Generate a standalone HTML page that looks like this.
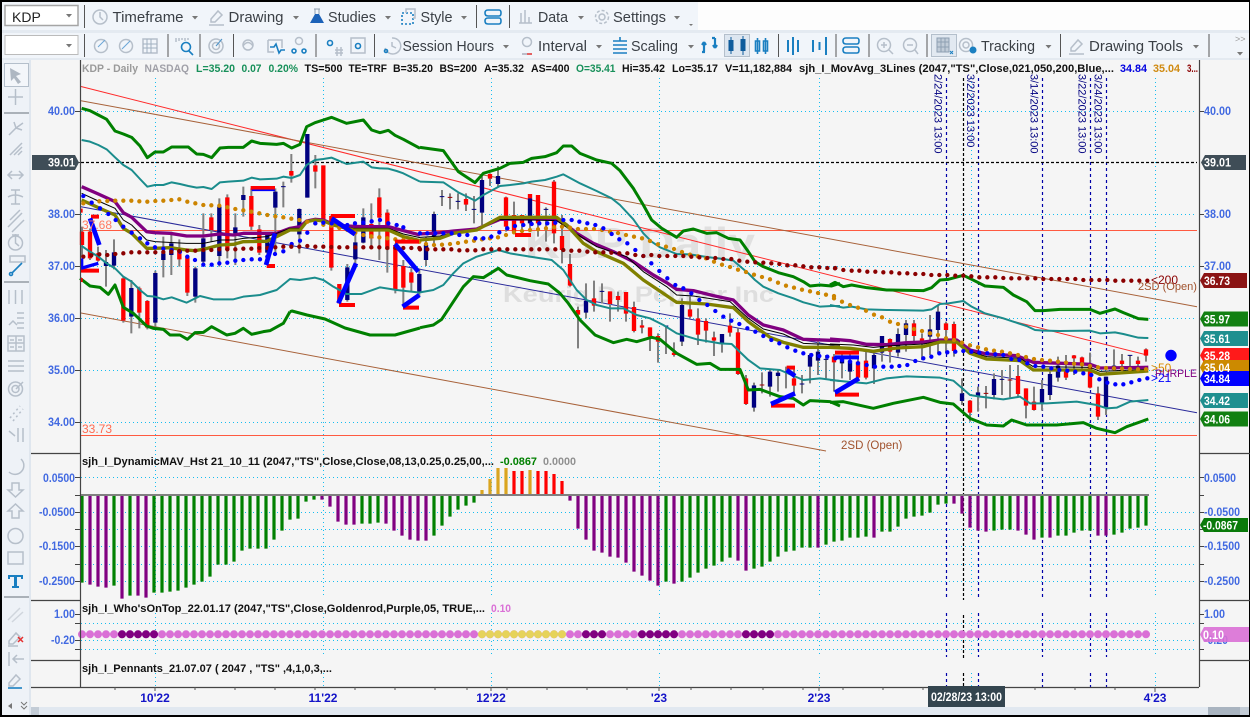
<!DOCTYPE html>
<html><head><meta charset="utf-8"><title>KDP Daily</title>
<style>
html,body{margin:0;padding:0;background:#000;width:1250px;height:717px;overflow:hidden}
svg{display:block;font-family:"Liberation Sans",sans-serif}
.tb{font-size:15px;fill:#3a3f45}
.inf{font-size:11px;font-weight:bold}
.ax{font-size:12px;font-weight:bold;fill:#4169e1}
.tg{font-size:12px;font-weight:bold;fill:#fff}
.tm{font-size:12px;font-weight:bold;fill:#1414c8}
.dv{stroke:#555;stroke-width:1}
.ic{fill:none;stroke:#b6bfca;stroke-width:1.5}
.ib{fill:none;stroke:#1a7fc1;stroke-width:1.6}
.ar{fill:#777}
.n{fill:none}
</style></head><body>
<svg width="1250" height="717" viewBox="0 0 1250 717" xmlns="http://www.w3.org/2000/svg">
<rect x="2" y="2" width="1247" height="713" fill="#f5f5f5"/>
<!-- toolbars -->
<rect x="2" y="2" width="1247" height="31" fill="#fdfdfd"/>
<rect x="2" y="2" width="696" height="28" fill="#f1f5fa"/>
<rect x="2" y="30" width="1247" height="3" fill="#e4eaf1"/>
<rect x="2" y="33" width="1247" height="26" fill="#f1f5fa"/>
<rect x="2" y="58" width="1247" height="2" fill="#e4eaf1"/>
<rect x="5" y="5.5" width="73" height="20" fill="#fff" stroke="#a5a5a5" stroke-width="1.5"/>
<text x="12" y="22" font-size="14" fill="#222">KDP</text>
<path class="ar" d="M66 14h6l-3 3.5z"/>
<rect x="5" y="35.5" width="73" height="19" fill="#fff" stroke="#bbb"/>
<path class="ar" d="M66 44h6l-3 3.5z"/>
<path class="dv" d="M84.5 5V28M476.5 5V28M509.5 5V28M84.5 34V57M168 34V57M200 34V57M233.500 34V57M316 34V57M374.500 34V57M778.500 34V57M836 34V57M869 34V57M927 34V57M1060.500 34V57M1209 34V57"/>
<text class="tb" x="112.500" y="22" textLength="71" lengthAdjust="spacingAndGlyphs">Timeframe</text>
<text class="tb" x="228.500" y="22" textLength="55" lengthAdjust="spacingAndGlyphs">Drawing</text>
<text class="tb" x="328" y="22" textLength="48" lengthAdjust="spacingAndGlyphs">Studies</text>
<text class="tb" x="420.500" y="22" textLength="32" lengthAdjust="spacingAndGlyphs">Style</text>
<text class="tb" x="538" y="22" textLength="30" lengthAdjust="spacingAndGlyphs">Data</text>
<text class="tb" x="613" y="22" textLength="53" lengthAdjust="spacingAndGlyphs">Settings</text>
<text class="tb" x="402.500" y="51" textLength="91.500" lengthAdjust="spacingAndGlyphs">Session Hours</text>
<text class="tb" x="538" y="51" textLength="49" lengthAdjust="spacingAndGlyphs">Interval</text>
<text class="tb" x="631" y="51" textLength="47" lengthAdjust="spacingAndGlyphs">Scaling</text>
<text class="tb" x="981" y="51" textLength="54" lengthAdjust="spacingAndGlyphs">Tracking</text>
<text class="tb" x="1089" y="51" textLength="94" lengthAdjust="spacingAndGlyphs">Drawing Tools</text>
<path class="ar" d="M192 16h6l-3 3.500zM293 16h6l-3 3.500zM385 16h6l-3 3.500zM461 16h6l-3 3.500zM578 16h6l-3 3.500zM674 16h6l-3 3.500zM689 24h4l-2 2zM503 45h6l-3 3.500zM596 45h6l-3 3.500zM688 45h6l-3 3.500zM1045.500 45h6l-3 3.500zM1193 45h6l-3 3.500zM1237 52h6l-3 3.500z"/>
<text x="1235" y="42" font-size="9" fill="#999">&gt;&gt;</text>
<!-- row 1 icons -->
<circle class="ic" cx="100" cy="17" r="7"/><path class="ic" d="M100 12V17L103 20"/>
<path class="ic" d="M211 19L218 11L222 15L215 22H211ZM209 25H224"/>
<path d="M314 9h6M315 9V14M319 9V14" stroke="#8fa0b0" fill="none"/><path d="M315 14h4l5 9h-14z" fill="#1c62b8"/>
<path class="ib" stroke-dasharray="2 2" d="M402 13H413V24H402Z"/><path class="ic" d="M406 13V9H415V18H413"/>
<path class="ib" stroke-width="2" d="M488 10H499Q501 10 501 13T499 16H488Q485 16 485 13T488 10ZM488 18H499Q501 18 501 21T499 24H488Q485 24 485 21T488 18Z"/>
<path class="ic" d="M519 23H532M521 23V13M525 23V10M529 23V17"/>
<circle class="ic" cx="602" cy="17" r="3"/><circle class="ic" cx="602" cy="17" r="6.500" stroke-dasharray="3 2"/>
<!-- row 2 icons -->
<circle class="ic" cx="101" cy="46" r="6.500"/><path d="M98 47L105 40" stroke="#6ba6d6" fill="none"/>
<circle class="ic" cx="126" cy="46" r="6.500"/><path d="M122 49L130 41" stroke="#6ba6d6" fill="none"/>
<rect class="ic" x="143" y="39" width="14" height="14" fill="#c5ced8"/><path d="M147 39V53M151 39V53M143 44H157M143 48H157" stroke="#9fb0c0" fill="none"/>
<circle class="ib" cx="186" cy="47" r="4.500"/><path class="ib" d="M189 51L193 55"/><path class="ic" d="M176 38V42M179 38V41M182 38V40M185 38V41M188 38V40"/>
<circle class="ic" cx="216" cy="46" r="7"/><circle class="ic" cx="216" cy="46" r="3.500"/><path d="M216 46L222 39" stroke="#4a92c8" fill="none"/>
<path class="ic" d="M243 46Q248 39 253 46"/><circle class="ic" cx="248" cy="45" r="5"/>
<path class="ic" d="M268 40H282V48M268 40V52H274"/><path class="ib" stroke-width="1" d="M270 47L274 47L276 44L279 53L281 50H285"/>
<circle class="ic" cx="299" cy="41" r="3.500"/><circle class="ib" stroke-width="1" cx="294" cy="51" r="2"/><circle class="ib" stroke-width="1" cx="304" cy="51" r="2"/>
<circle class="ib" stroke-width="3" cx="330" cy="43" r="2.500"/><path class="ic" d="M335 50H343M335 53H343M337 47V56M341 47V56" stroke-width="1"/>
<rect class="ic" x="351" y="38" width="14" height="15" fill="#d9e2ec"/><circle class="ib" stroke-width="3" cx="358" cy="46" r="2.500"/>
<path class="ic" d="M392 38A8 8 0 1 1 385 48M392 42V46L396 48"/><circle class="ib" cx="386" cy="51" r="1.500"/>
<circle class="ic" cx="527" cy="42" r="4.500"/><path d="M522 54H527" stroke="#aab" stroke-width="1.500"/><path d="M527 54H532" stroke="#e03030" stroke-width="1.500"/>
<path class="ib" d="M613 41H627M613 45H627M613 49H627M613 53H627M620 37V41"/>
<path d="M704 52V42M704 42L702 45M704 42L706 45M715 38V48M715 48L713 45M715 48L717 45M702 52h3M712 38h3" stroke="#1a7fc1" stroke-width="2.200" fill="none"/>
<rect x="724.500" y="34.500" width="25" height="22" fill="#dde6f0" stroke="#b4bfcb"/>
<path d="M731 37V54M743 36V55" stroke="#0f5c9c" fill="none"/><rect x="728.500" y="40" width="5" height="11" fill="#0f5c9c"/><rect x="740.500" y="39" width="5" height="12" fill="#0f5c9c"/>
<path class="ib" stroke-width="1" d="M755.500 41H759.500V51H755.500ZM763.500 41H767.500V51H763.500ZM757.500 38V54M765.500 38V54"/>
<path d="M788 40V52M793 37V55M798 40V52" stroke="#1a7fc1" stroke-width="2" fill="none"/>
<path d="M813 40V52M819.500 42V50M826 37V55" stroke="#1a7fc1" stroke-width="2" fill="none"/>
<path class="ib" stroke-width="2" d="M846 38H857Q859 38 859 41T857 44H846Q843 44 843 41T846 38ZM846 47H857Q859 47 859 50T857 53H846Q843 53 843 50T846 47Z"/>
<circle class="ic" cx="884" cy="45" r="6.500"/><path class="ic" d="M881 45H887M884 42V48M889 50L893 54"/>
<circle class="ic" cx="910" cy="45" r="6.500" stroke="#d0d6dd"/><path class="ic" d="M907 45H913M915 50L918 54" stroke="#d0d6dd"/>
<rect x="931.500" y="34.500" width="25" height="22" fill="#e2e9f1" stroke="#b4bfcb"/>
<rect x="937" y="38" width="12" height="14" fill="#c1ccd8" stroke="#8ea0b2"/><path d="M941 38V52M945 38V52M937 42H949M937 47H949" stroke="#8ea0b2" fill="none"/><path d="M950 51L953 54M953 51L950 54" stroke="#1a7fc1"/>
<circle class="ic" cx="966" cy="45" r="6.500"/><circle class="ic" cx="966" cy="45" r="3"/><circle cx="973" cy="50" r="3.500" fill="#1a7fc1"/>
<path class="ic" d="M1071 48L1078 40L1082 44L1075 51H1071ZM1069 54H1084"/>
<!-- info line -->
<text class="inf" fill="#9a9a9a" x="82" y="72" textLength="56" lengthAdjust="spacingAndGlyphs">KDP - Daily</text>
<text class="inf" fill="#a0a0a8" x="144.500" y="72" textLength="44.500" lengthAdjust="spacingAndGlyphs">NASDAQ</text>
<g fill="#18905a" class="inf"><text x="196" y="72" textLength="39" lengthAdjust="spacingAndGlyphs">L=35.20</text>
<text x="241.500" y="72" textLength="20" lengthAdjust="spacingAndGlyphs">0.07</text>
<text x="268.500" y="72" textLength="29.500" lengthAdjust="spacingAndGlyphs">0.20%</text>
<text x="576" y="72" textLength="39.500" lengthAdjust="spacingAndGlyphs">O=35.41</text></g>
<g fill="#111" class="inf"><text x="304.500" y="72" textLength="38" lengthAdjust="spacingAndGlyphs">TS=500</text>
<text x="348.500" y="72" textLength="38.500" lengthAdjust="spacingAndGlyphs">TE=TRF</text>
<text x="393" y="72" textLength="40" lengthAdjust="spacingAndGlyphs">B=35.20</text>
<text x="439.500" y="72" textLength="37.500" lengthAdjust="spacingAndGlyphs">BS=200</text>
<text x="484" y="72" textLength="40" lengthAdjust="spacingAndGlyphs">A=35.32</text>
<text x="531" y="72" textLength="38.500" lengthAdjust="spacingAndGlyphs">AS=400</text>
<text x="622" y="72" textLength="43" lengthAdjust="spacingAndGlyphs">Hi=35.42</text>
<text x="672" y="72" textLength="46" lengthAdjust="spacingAndGlyphs">Lo=35.17</text>
<text x="725" y="72" textLength="67" lengthAdjust="spacingAndGlyphs">V=11,182,884</text>
<text x="799" y="72" textLength="315" lengthAdjust="spacingAndGlyphs">sjh_I_MovAvg_3Lines (2047,"TS",Close,021,050,200,Blue,...</text></g>
<text class="inf" fill="#0000e0" x="1120" y="72" textLength="27" lengthAdjust="spacingAndGlyphs">34.84</text>
<text class="inf" fill="#d08a10" x="1153" y="72" textLength="27" lengthAdjust="spacingAndGlyphs">35.04</text>
<text class="inf" fill="#8b0000" x="1187" y="72" textLength="11" lengthAdjust="spacingAndGlyphs">3...</text>
<!-- watermark -->
<text x="525" y="258" font-size="44" font-weight="bold" fill="#e0e0e0" textLength="230" lengthAdjust="spacingAndGlyphs">KDP Daily</text>
<text x="503" y="302" font-size="22" font-weight="bold" fill="#dedede" textLength="271" lengthAdjust="spacingAndGlyphs">Keurig Dr Pepper Inc</text>
<!-- grids -->
<path stroke="#16bdf0" stroke-dasharray="1 3" fill="none" d="M81 111.500H1197M81 214.500H1197M81 266.500H1197M81 318.500H1197M81 370.500H1197M81 422.500H1197M81 477.500H1197M81 512.500H1197M81 529.500H1197M81 546.500H1197M81 564.500H1197M81 581.500H1197M81 623.500H1197M81 640.500H1197M81 649.500H1197"/>
<path stroke="#16bdf0" stroke-dasharray="1 3" fill="none" d="M155.500 78V597M155.500 613V657M155.500 673V687M323.500 78V597M323.500 613V657M323.500 673V687M491.500 78V597M491.500 613V657M491.500 673V687M659.500 78V597M659.500 613V657M659.500 673V687M819.500 78V597M819.500 613V657M819.500 673V687M971.500 78V597M971.500 613V657M971.500 673V687M1155.500 78V597M1155.500 613V657M1155.500 673V687"/>
<path stroke="#0000a8" stroke-width="1.200" stroke-dasharray="3 3" fill="none" d="M946.500 78V597M946.500 613V657M946.500 673V687M978.500 78V597M978.500 613V657M978.500 673V687M1042.500 78V597M1042.500 613V657M1042.500 673V687M1090.500 78V597M1090.500 613V657M1090.500 673V687M1106.500 78V597M1106.500 613V657M1106.500 673V687"/>
<path stroke="#000" stroke-width="1.200" stroke-dasharray="3 2" fill="none" d="M963.500 78V600M963.500 615V659M963.500 673V687M81 162.500H1197"/>
<!-- rotated dates -->
<g font-size="11" fill="#000080">
<text transform="translate(934.500,74) rotate(90)">2/24/2023 13:00</text>
<text transform="translate(967,74) rotate(90)">3/2/2023 13:00</text>
<text transform="translate(1030.500,74) rotate(90)">3/14/2023 13:00</text>
<text transform="translate(1078.500,74) rotate(90)">3/22/2023 13:00</text>
<text transform="translate(1094.500,74) rotate(90)">3/24/2023 13:00</text>
</g>
<!-- horizontal + diagonal -->
<path stroke="#ff5a40" fill="none" d="M81 230.500H1197M81 435.500H1197"/>
<path stroke="#ff2a2a" fill="none" d="M81 86.500L1147 355"/>
<path stroke="#a8623a" fill="none" d="M81 100.700L1197 306.700M81 313L826 451"/>
<path stroke="#2a2a9a" fill="none" d="M81 206.700L1197 412.700"/>
<!-- candles Z9 -->
<g transform="translate(80,200) scale(.33333)" fill="none">
<path stroke="#808080" stroke-width="6" d="M6 80V170M30 85V180M54 140V185M78 150V260M102 118V208M130 230V368M154 240V400M178 260V385M202 300V388M226 212V380M250 110V232M274 95V225M298 118V200M322 165V288M346 200V308M370 40V190M394 40V125M418 -5V200M442 -17V175M466 40V195M490 -40V50M514 -35V90M538 75V165M562 100V170M586 -35V165"/>
<path stroke="#ff0000" stroke-width="13" d="M6 95V135M30 95V175M54 160V182M130 235V362M178 265V338M202 303V383M298 150V178M322 168V278M394 52V90M442 -8V150M514 -12V80M538 88V158"/>
<path stroke="#000080" stroke-width="13" d="M78 186V198M102 157V197M154 264V350M226 219V368M250 160V180M274 130V165M346 205V290M370 115V185M418 20V168M466 82V100M490 -15V0M562 105V158M586 -25V23"/>
</g>
<!-- candles Z10 -->
<g transform="translate(280,120) scale(.33333)" fill="none">
<path stroke="#808080" stroke-width="6" d="M10 185V262M34 102V188M58 265V400M82 42V233M106 105V205M130 136V300M154 288V452M178 492V550M202 432V545M226 340V430M250 265V370M274 250V380M298 205V420M322 268V458M346 370V520M370 420V560M394 445V515M418 445V530"/>
<path stroke="#ff0000" stroke-width="13" d="M34 153V167M106 136V155M130 136V297M154 288V443M178 492V550M274 312V355M298 232V293M322 278V388M346 375V510M370 438V503M394 457V488"/>
<path stroke="#000080" stroke-width="13" d="M58 267V343M82 42V233M202 442V540M226 367V418M250 292V368M418 462V515"/>
<path stroke="#000080" stroke-width="3" d="M3 200H17"/>
</g>
<!-- candles Z4 -->
<g transform="translate(420,130) scale(.33333)" fill="none">
<path stroke="#808080" stroke-width="6" d="M18 320V408M42 245V340M66 180V228M90 190V238M114 190V238M138 190V243M162 198V280M186 140V285M210 130V168M234 108V170M258 200V305M282 215V310M306 255V305M330 192V300M354 195V320M378 232V335M402 150V340M426 255V400M450 372V470M474 530V655M498 460V565M522 452V545M546 460V520M570 484V575M594 485V545M618 486V575M642 515V607M666 570V610M690 592V663M714 610V698M738 588V672M762 637V680M786 505V648M810 500V565M834 535V645M858 565V638M882 605V678M906 612V668M930 550V620M954 595V735M978 735V825M1002 758V845M1026 727V790M1050 720V800M1074 720V785M1098 710V775M1122 715V790M1146 735V790M1170 670V760M1194 635V735M1218 675V745M1242 672V785"/>
<path stroke="#ff0000" stroke-width="13" d="M138 207V224M210 132V146M258 202V290M282 255V305M306 255V280M330 192V205M354 195V280M402 155V310M426 318V360M450 402V467M474 540V554M522 505V527M570 484V522M594 498V510M618 486V551M642 531V603M666 586V593M690 592V620M714 618V635M762 668V675M810 538V560M834 565V614M858 573V602M882 622V632M930 587V608M954 607V732M978 745V822M1122 745V767M1242 680V697"/>
<path stroke="#000080" stroke-width="13" d="M18 345V390M42 252V320M186 150V248M234 138V162M330 205V280M498 512V548M786 525V635M906 612V640M1002 766V833M1050 725V770M1074 728V738M1170 675V710M1194 665V692"/>
<path stroke="#000080" stroke-width="3" d="M59 200H73M107 214H121M155 238H169M371 238H385M539 484H553M731 588H745M1139 762H1153M1211 688H1225"/>
<path stroke="#a00000" stroke-width="3" d="M83 202H97M1019 765H1033"/>
</g>
<!-- candles Z5 -->
<g transform="translate(830,240) scale(.33333)" fill="none">
<path stroke="#808080" stroke-width="6" d="M36 340V415M60 340V420M84 355V415M108 335V418M132 340V432M156 288V365M180 295V368M204 265V350M228 240V335M252 240V315M276 280V360M300 225V345M324 198V340M348 245V340M372 245V350M396 415V495M420 480V545M444 440V515M468 438V505M492 400V478M516 390V465M540 375V472M564 375V470M588 445V535M612 440V512M636 420V512M660 395V480M684 350V425M708 345V420M732 345V405M756 350V395M780 338V445M804 440V540M828 410V525M852 328V390M876 342V390M900 345V385M924 350V385M948 325V365"/>
<path stroke="#ff0000" stroke-width="13" d="M84 365V413M108 362V413M180 297V335M252 250V288M276 295V305M348 250V270M372 252V333M420 482V518M564 408V462M588 445V497M612 485V510M708 390V413M732 346V355M756 352V368M780 375V443M804 460V530M876 362V372M924 362V372M948 328V347"/>
<path stroke="#000080" stroke-width="13" d="M36 350V370M60 362V395M132 345V385M156 288V338M204 282V338M228 250V285M300 268V290M324 215V270M396 460V483M444 457V470M492 417V465M636 447V490M660 402V465M684 377V413M828 410V502M852 377V390"/>
<path stroke="#000080" stroke-width="3" d="M509 418H523M893 346H907"/>
<path stroke="#a00000" stroke-width="3" d="M461 460H475M533 420H547"/>
</g>
<!-- bands and MAs Z3 -->
<g transform="translate(0,60) scale(.33333)" fill="none" stroke-linejoin="round">
<polyline stroke="#008000" stroke-width="9" points="245,145 270,152 295,165 320,178 345,213 370,222 395,232 420,258 442,293 465,276 490,276 515,261 540,261 565,261 590,282 610,283 635,293 660,264 685,262 730,262 755,243 780,250 830,253 850,250 875,264 900,253 920,200 945,188 970,180 995,172 1040,190 1090,180 1115,210 1140,218 1165,211 1185,226 1210,238 1260,265"/>
<polyline stroke="#1a8c8c" stroke-width="6" points="245,240 270,245 295,255 320,268 345,292 370,315 395,330 420,357 442,380 465,375 490,375 515,367 540,372 565,378 590,383 610,381 635,387 660,367 685,365 730,362 755,353 780,358 830,356 850,350 875,354 900,345 920,315 945,300 970,297 995,293 1040,312 1090,305 1115,322 1140,325 1165,326 1190,333 1210,340 1260,365"/>
<polyline stroke="#1a8c8c" stroke-width="6" points="245,558 270,575 295,590 320,610 345,625 370,650 395,665 420,690 442,708 465,710 490,718 515,712 560,728 600,708 640,718 700,718 730,710 780,705 830,690 870,657 900,660 945,653 970,660 1000,680 1040,702 1085,702 1140,682 1190,690 1260,698"/>
<polyline stroke="#800080" stroke-width="10" points="245,380 295,402 345,425 370,458 395,472 440,515 465,518 510,520 560,528 610,528 660,522 700,525 730,520 830,520 870,505 900,500 920,483 945,478 970,480 1000,493 1040,498 1090,500 1165,500 1210,512 1260,525"/>
<polyline stroke="#000" stroke-width="3" points="245,400 295,423 345,445 370,480 395,495 440,540 465,545 560,550 610,550 660,540 700,540 730,535 800,530 830,520 870,505 900,505 920,485 945,480 970,482 1000,495 1060,505 1165,505 1210,522 1260,533"/>
<polyline stroke="#808000" stroke-width="10" points="245,420 295,443 345,465 370,505 395,520 440,565 465,565 510,563 560,570 585,572 610,568 660,555 700,553 730,545 800,544 830,530 870,510 900,510 920,485 945,480 970,483 1000,495 1060,510 1165,510 1210,530 1260,542"/>
<path stroke="#cc8400" stroke-width="13" stroke-linecap="round" d="M250 430h0M274 428h0M298 424h0M322 423h0M346 422h0M370 422h0M394 422h0M418 424h0M442 425h0M466 423h0M490 422h0M514 420h0M538 418h0M562 425h0M586 430h0M610 435h0M634 436h0M658 437h0M682 442h0M706 447h0M730 451h0M754 455h0M778 460h0M802 465h0M826 469h0M850 472h0M874 476h0M898 480h0M922 485h0M946 490h0M970 494h0M994 497h0M1018 504h0M1042 510h0M1066 518h0M1090 525h0M1114 529h0M1138 532h0M1162 535h0M1186 538h0M1210 540h0M1234 543h0M1258 545h0"/>
<path stroke="#0000ff" stroke-width="13" stroke-linecap="round" d="M250 408h0M275 428h0M300 445h0M325 462h0M347 480h0M370 500h0M395 518h0M420 535h0M442 550h0M465 562h0M490 566h0M515 570h0M540 575h0M562 590h0M585 600h0M610 614h0M635 614h0M658 610h0M682 608h0M706 602h0M730 600h0M755 598h0M780 598h0M802 590h0M825 582h0M850 574h0M875 552h0M900 542h0M922 518h0M946 490h0M970 488h0M995 490h0M1018 492h0M1042 495h0M1065 490h0M1090 488h0M1115 484h0M1140 480h0M1165 490h0M1190 495h0M1210 502h0"/>
<path stroke="#8b0000" stroke-width="13" stroke-linecap="round" d="M250 590h0M274 586h0M298 583h0M322 585h0M346 582h0M370 580h0M394 577h0M418 577h0M442 577h0M466 577h0M490 576h0M514 575h0M538 573h0M562 572h0M586 572h0M610 570h0M634 570h0M658 568h0M682 568h0M706 568h0M730 566h0M754 566h0M778 564h0M802 564h0M826 562h0M850 560h0M874 560h0M898 560h0M922 558h0M946 560h0M970 560h0M994 561h0M1018 562h0M1042 562h0M1066 562h0M1090 562h0M1114 562h0M1138 562h0M1162 564h0M1186 564h0M1210 564h0M1234 564h0M1258 564h0"/>
</g>
<!-- lower green Z9 + join -->
<g transform="translate(80,200) scale(.33333)" fill="none" stroke-linejoin="round">
<polyline stroke="#008000" stroke-width="9" points="0,235 30,258 60,262 85,283 105,255 130,322 160,340 200,378 220,385 250,388 270,405 300,405 322,418 345,398 370,397 395,380 440,405 465,400 490,385 515,403 550,395 570,392 610,370 630,335"/>
</g>
<polyline fill="none" stroke="#008000" stroke-width="3" stroke-linejoin="round" points="290,311.700 292,311 307,315 325,319 345,328 370,335 395,335 420,328"/>
<!-- bands and MAs Z4 -->
<g transform="translate(420,130) scale(.33333)" fill="none" stroke-linejoin="round">
<polyline stroke="#008000" stroke-width="9" points="0,52 70,62 115,125 165,158 190,130 240,115 270,100 310,97 335,85 375,80 410,68 430,48 455,48 480,70 530,90 575,100 600,122 640,175 670,225 695,270 725,295 770,322 790,303 820,297 860,310 890,308 925,325 960,330 985,365 1005,395 1030,410 1075,428 1120,440 1150,455 1170,468 1200,465 1235,468 1260,460"/>
<polyline stroke="#1a8c8c" stroke-width="6" points="0,155 70,157 115,187 165,212 190,195 240,168 270,165 310,160 335,155 375,150 410,140 430,133 480,160 530,183 575,205 600,225 640,268 670,310 695,335 720,352 770,372 810,373 860,381 910,387 940,392 985,430 1005,450 1030,470 1075,490 1120,505 1150,517 1200,530 1235,528 1260,528"/>
<polyline stroke="#1a8c8c" stroke-width="6" points="0,487 40,480 70,465 100,430 130,400 170,380 235,360 270,370 330,380 395,390 430,420 470,480 500,510 530,525 570,535 610,535 650,555 690,565 730,585 770,610 830,628 900,640 935,642 985,690 1020,715 1080,720 1150,750 1200,745 1260,753"/>
<polyline stroke="#008000" stroke-width="9" points="0,593 40,585 65,568 100,515 130,470 160,440 190,443 235,415 260,435 330,452 385,462 420,490 445,520 480,570 525,615 580,638 620,628 650,635 695,622 720,628 770,670 830,703 870,700 900,718 960,718 985,780 1020,778 1080,800 1120,805 1150,825 1170,812 1230,815 1260,828"/>
<polyline stroke="#800080" stroke-width="10" points="0,312 60,308 100,303 170,297 240,268 410,265 440,285 470,310 520,340 580,365 640,395 700,435 740,458 770,478 820,482 880,497 940,510 985,555 1030,585 1090,600 1150,628 1260,632"/>
<polyline stroke="#000" stroke-width="3" points="0,322 60,318 100,308 170,299 240,268 410,272 490,325 530,350 620,380 670,425 740,470 770,495 820,498 930,515 985,565 1030,597 1090,612 1150,640 1260,645"/>
<polyline stroke="#808000" stroke-width="10" points="0,330 60,325 100,310 170,300 240,262 410,262 440,285 490,340 530,365 610,400 670,450 730,490 770,517 860,522 940,533 985,575 1050,622 1090,637 1150,652 1260,652"/>
<path stroke="#cc8400" stroke-width="13" stroke-linecap="round" d="M18 342h0M42 345h0M66 344h0M90 342h0M114 339h0M138 335h0M162 332h0M186 328h0M210 325h0M234 322h0M258 315h0M282 307h0M306 303h0M330 300h0M354 298h0M378 295h0M402 292h0M426 290h0M450 293h0M474 297h0M498 297h0M522 297h0M546 300h0M570 305h0M594 309h0M618 315h0M642 320h0M666 325h0M690 333h0M714 343h0M738 350h0M762 357h0M786 366h0M810 374h0M834 379h0M858 385h0M882 395h0M906 404h0M930 411h0M954 419h0M978 426h0M1002 434h0M1026 441h0M1050 448h0M1074 458h0M1098 467h0M1122 473h0M1146 479h0M1170 484h0M1194 489h0M1218 494h0M1242 498h0"/>
<path stroke="#0000ff" stroke-width="13" stroke-linecap="round" d="M0 310h0M22 310h0M46 310h0M70 310h0M95 310h0M118 315h0M142 315h0M166 325h0M190 325h0M214 320h0M238 307h0M262 295h0M285 288h0M310 285h0M335 282h0M358 280h0M382 280h0M406 278h0M430 270h0M455 270h0M478 275h0M502 280h0M526 285h0M550 295h0M575 312h0M598 328h0M622 340h0M646 360h0M670 378h0M694 400h0M718 423h0M742 445h0M766 465h0M790 475h0M814 490h0M838 510h0M862 525h0M886 543h0M910 560h0M934 572h0M958 582h0M982 595h0M1006 605h0M1030 618h0M1054 630h0M1078 640h0M1102 652h0M1126 662h0M1150 670h0M1174 675h0M1198 678h0M1222 680h0M1246 685h0"/>
<path stroke="#8b0000" stroke-width="13" stroke-linecap="round" d="M0 358h0M22 358h0M46 358h0M70 358h0M94 358h0M118 361h0M142 361h0M166 361h0M190 358h0M214 358h0M238 358h0M262 358h0M286 358h0M310 358h0M334 358h0M358 358h0M382 358h0M406 358h0M430 360h0M454 362h0M478 362h0M502 365h0M526 367h0M550 367h0M574 368h0M598 370h0M622 370h0M646 375h0M670 378h0M694 375h0M718 378h0M742 378h0M766 378h0M790 378h0M814 380h0M838 382h0M862 384h0M886 384h0M910 387h0M934 387h0M958 392h0M982 395h0M1006 397h0M1030 398h0M1054 400h0M1078 402h0M1102 406h0M1126 406h0M1150 409h0M1174 412h0M1198 412h0M1222 414h0M1246 414h0"/>
</g>
<!-- bands and MAs Z5 -->
<g transform="translate(830,240) scale(.33333)" fill="none" stroke-linejoin="round">
<polyline stroke="#008000" stroke-width="9" points="0,135 15,127 40,140 65,135 110,143 170,150 280,152 305,143 330,120 355,118 400,106 425,118 465,138 520,142 550,165 590,185 615,212 640,212 690,208 780,208 810,220 855,207 880,218 925,236 955,238"/>
<polyline stroke="#1a8c8c" stroke-width="6" points="0,195 40,203 65,200 110,208 170,210 280,212 305,208 330,192 355,190 400,183 425,200 465,220 520,235 550,245 590,258 615,270 640,272 690,273 780,272 810,280 855,277 880,282 925,293 955,294"/>
<polyline stroke="#1a8c8c" stroke-width="6" points="0,420 50,425 110,430 170,415 230,409 330,413 370,422 420,465 450,470 520,478 570,470 600,490 650,490 740,485 800,495 830,505 860,503 900,485 955,480"/>
<polyline stroke="#008000" stroke-width="9" points="0,487 40,485 130,505 190,490 280,472 330,487 370,492 420,535 470,555 520,558 545,540 590,555 680,555 760,548 800,565 855,578 890,560 955,537"/>
<polyline stroke="#800080" stroke-width="10" points="0,297 60,302 110,313 170,314 230,308 280,306 330,300 380,300 420,330 470,342 560,347 610,367 780,373 810,384 955,382"/>
<polyline stroke="#000" stroke-width="3" points="0,312 70,315 130,322 200,316 280,312 330,303 380,303 420,335 470,350 570,355 610,380 780,382 810,394 955,388"/>
<polyline stroke="#808000" stroke-width="10" points="0,322 60,325 130,334 200,324 280,320 330,306 380,306 420,340 470,357 570,362 610,390 780,390 810,403 955,393"/>
<path stroke="#cc8400" stroke-width="13" stroke-linecap="round" d="M12 175h0M36 185h0M60 195h0M84 203h0M108 212h0M132 224h0M156 232h0M180 245h0M204 252h0M228 260h0M252 267h0M276 273h0M300 280h0M324 285h0M348 295h0M372 300h0M396 308h0M420 316h0M444 322h0M468 328h0M492 332h0M516 335h0M540 340h0M564 345h0M588 351h0M612 357h0M636 360h0M660 362h0M684 365h0M708 368h0M732 371h0M756 373h0M780 378h0M804 382h0M828 384h0M852 385h0M876 386h0M900 387h0M924 388h0M948 388h0"/>
<path stroke="#0000ff" stroke-width="13" stroke-linecap="round" d="M36 360h0M60 365h0M84 370h0M110 375h0M135 380h0M160 380h0M185 380h0M208 378h0M232 375h0M256 363h0M280 355h0M304 350h0M328 340h0M352 337h0M376 335h0M400 333h0M424 335h0M448 338h0M472 340h0M496 343h0M520 345h0M544 357h0M568 360h0M592 370h0M616 378h0M640 380h0M664 385h0M688 390h0M712 392h0M736 395h0M760 400h0M784 405h0M808 418h0M832 428h0M856 433h0M880 433h0M904 427h0M928 420h0M952 415h0"/>
<path stroke="#8b0000" stroke-width="13" stroke-linecap="round" d="M15 85h0M40 90h0M65 92h0M88 92h0M112 95h0M136 95h0M160 97h0M184 97h0M208 100h0M232 100h0M256 102h0M280 102h0M304 105h0M328 105h0M352 105h0M376 107h0M400 107h0M424 109h0M448 112h0M472 112h0M496 112h0M520 114h0M544 115h0M568 115h0M592 115h0M616 115h0M640 117h0M664 117h0M688 117h0M712 117h0M736 117h0M760 120h0M784 120h0M808 120h0M832 120h0M856 122h0M880 122h0M904 122h0M928 122h0M952 122h0"/>
<!-- pennants Z5 -->
<path stroke="#ff0000" stroke-width="12" d="M15 338H87M15 464H87"/>
<path stroke="#0000ff" stroke-width="12" d="M15 352H87"/>
<path stroke="#0000ff" stroke-width="14" d="M15 458L87 415"/>
</g>
<!-- pennants Z9 -->
<g transform="translate(80,200) scale(.33333)" fill="none">
<path stroke="#ff0000" stroke-width="12" d="M33 50H57M0 212H57M3 240H8M3 32H8M560 198H585M512 -36H585"/>
<path stroke="#0000ff" stroke-width="14" d="M30 55L58 135M585 100L558 195"/>
<path stroke="#0000ff" stroke-width="10" d="M3 205L55 190M5 175V200"/>
<path stroke="#0000ff" stroke-width="5" d="M515 -29H585"/>
</g>
<!-- pennants Z10 -->
<g transform="translate(280,120) scale(.33333)" fill="none">
<path stroke="#ff0000" stroke-width="12" d="M152 288H225M177 555H225M345 365H417M369 563H417"/>
<path stroke="#0000ff" stroke-width="14" d="M155 295L225 343M175 550L228 430M345 372L415 455M368 560L418 525"/>
</g>
<!-- pennants Z4 -->
<g transform="translate(420,130) scale(.33333)" fill="none">
<path stroke="#ff0000" stroke-width="12" d="M285 315H333M1053 827H1125M1100 713H1125"/>
<path stroke="#0000ff" stroke-width="14" d="M1053 822L1125 790M1100 720L1125 738"/>
</g>
<circle cx="1171" cy="355.500" r="5.700" fill="#0000ff"/>
<!-- chart annotation text -->
<text x="82" y="229" font-size="12" fill="#ff7a60">37.68</text>
<text x="82" y="433" font-size="12" fill="#ff6a50">33.73</text>
<text x="841" y="449" font-size="11.500" fill="#a0522d">2SD (Open)</text>
<text x="1151" y="284" font-size="12" fill="#8b0000">&lt;200</text>
<text x="1138" y="290" font-size="11" fill="#a0522d" textLength="59" lengthAdjust="spacingAndGlyphs">2SD (Open)</text>
<text x="1151" y="372" font-size="12" fill="#d98a00">&gt;50</text>
<text x="1155" y="377" font-size="11" fill="#800080" textLength="42" lengthAdjust="spacingAndGlyphs">PURPLE</text>
<text x="1151" y="382" font-size="12" fill="#0000ff">&gt;21</text>
<!-- histogram -->
<g transform="translate(0,450) scale(1,.33333)" fill="none" stroke-width="3.200">
<path stroke="#008000" d="M82 135V398M114 135V407M130 135V437M154 135V428M162 135V428M170 135V425M178 135V422M186 135V413M194 135V404M202 135V395M210 135V380M218 135V344M226 135V344M234 135V335M242 135V302M250 135V296M258 135V296M266 135V296M274 135V269M282 135V242M290 135V209M298 135V206M306 135V155M314 135V149M362 135V221M370 135V221M378 135V218M434 135V257M442 135V227M450 135V200M458 135V179M466 135V167M474 135V158M666 135V395M682 135V395M690 135V383M698 135V368M706 135V356M714 135V347M722 135V335M730 135V323M754 135V356M762 135V350M770 135V335M778 135V320M786 135V305M794 135V302M802 135V293M810 135V293M826 135V284M834 135V275M842 135V272M850 135V263M858 135V263M866 135V260M882 135V245M890 135V245M898 135V230M906 135V206M914 135V200M922 135V197M930 135V188M938 135V164M946 135V161M994 135V242M1002 135V239M1010 135V239M1042 135V263M1058 135V257M1066 135V257M1074 135V248M1082 135V242M1090 135V242M1114 135V254M1122 135V248M1130 135V236M1138 135V233M1146 135V227"/>
<path stroke="#800080" d="M90 135V404M98 135V410M106 135V413M122 135V446M138 135V437M146 135V443M322 135V149M330 135V170M338 135V215M346 135V224M354 135V224M386 135V221M394 135V242M402 135V257M410 135V269M418 135V272M426 135V272M570 135V152M578 135V236M586 135V269M594 135V302M602 135V308M610 135V320M618 135V323M626 135V338M634 135V365M642 135V377M650 135V392M658 135V407M674 135V401M738 135V332M746 135V362M818 135V293M874 135V263M954 135V161M962 135V191M970 135V233M978 135V242M986 135V245M1018 135V242M1026 135V254M1034 135V269M1050 135V263M1098 135V257M1106 135V257"/>
<path stroke="#daa520" d="M482 135V120M490 135V87M498 135V54M506 135V54M530 135V60"/>
<path stroke="#ff0000" d="M514 135V63M522 135V63M538 135V63M546 135V63M554 135V72M562 135V93"/>
</g>
<path stroke="#808080" stroke-width="2" d="M81 495H1149"/>
<text class="inf" fill="#111" x="82" y="465" textLength="412" lengthAdjust="spacingAndGlyphs">sjh_I_DynamicMAV_Hst 21_10_11 (2047,"TS",Close,Close,08,13,0.25,0.25,00,...</text>
<text class="inf" fill="#008000" x="500" y="465" textLength="37" lengthAdjust="spacingAndGlyphs">-0.0867</text>
<text class="inf" fill="#909090" x="543" y="465" textLength="33" lengthAdjust="spacingAndGlyphs">0.0000</text>
<text class="inf" fill="#111" x="82" y="612" textLength="403" lengthAdjust="spacingAndGlyphs">sjh_I_Who'sOnTop_22.01.17 (2047,"TS",Close,Goldenrod,Purple,05, TRUE,...</text>
<text class="inf" fill="#da70d6" x="491" y="612" textLength="20" lengthAdjust="spacingAndGlyphs">0.10</text>
<text class="inf" fill="#111" x="82" y="672" textLength="250" lengthAdjust="spacingAndGlyphs">sjh_I_Pennants_21.07.07 ( 2047 , "TS" ,4,1,0,3,...</text>
<!-- dots row -->
<path fill="none" stroke="#da70d6" stroke-width="8" stroke-linecap="round" stroke-dasharray="0 8" d="M82 634.300H1154"/>
<path fill="none" stroke="#e6d35a" stroke-width="8" stroke-linecap="round" d="M482 634.300h0M490 634.300h0M498 634.300h0M506 634.300h0M514 634.300h0M522 634.300h0M530 634.300h0M538 634.300h0M546 634.300h0M554 634.300h0M562 634.300h0"/>
<path fill="none" stroke="#800080" stroke-width="8" stroke-linecap="round" d="M122 634.300h0M130 634.300h0M138 634.300h0M146 634.300h0M154 634.300h0M586 634.300h0M594 634.300h0M602 634.300h0M642 634.300h0M650 634.300h0M658 634.300h0M666 634.300h0M674 634.300h0M746 634.300h0M754 634.300h0M762 634.300h0M770 634.300h0"/>
<!-- axes background / lines -->
<path stroke="#444" stroke-width="1.200" fill="none" d="M80.500 60V687M1199.500 60V687M31 687.500H1199M31 453.500H80M31 600.500H80M31 660.500H80M1199 453.500H1250M1199 600.500H1250M1199 660.500H1250"/>
<path stroke="#444" fill="none" d="M75 111.500H80M75 162.500H80M75 214.500H80M75 266.500H80M75 318.500H80M75 370.500H80M75 422.500H80M75 477.500H80M75 495.500H80M75 512.500H80M75 529.500H80M75 546.500H80M75 564.500H80M75 581.500H80M75 614.500H80M75 623.500H80M75 640.500H80M75 649.500H80M1199 111.500H1204M1199 214.500H1204M1199 266.500H1204M1199 477.500H1204M1199 495.500H1204M1199 512.500H1204M1199 529.500H1204M1199 546.500H1204M1199 564.500H1204M1199 581.500H1204M1199 614.500H1204M1199 623.500H1204M1199 649.500H1204"/>
<path stroke="#555" fill="none" d="M115 687V690M155 687V691M195 687V690M235 687V690M275 687V690M315 687V690M355 687V690M395 687V690M435 687V690M467 687V690M491 687V691M507 687V690M547 687V690M587 687V690M627 687V690M659 687V691M691 687V690M731 687V690M763 687V690M803 687V690M819 687V691M843 687V690M883 687V690M923 687V690M1035 687V690M1075 687V690M1115 687V690M1155 687V692"/>
<!-- axis labels left -->
<g class="ax">
<text x="48" y="115" textLength="27" lengthAdjust="spacingAndGlyphs">40.00</text>
<text x="48" y="218" textLength="27" lengthAdjust="spacingAndGlyphs">38.00</text>
<text x="48" y="270" textLength="27" lengthAdjust="spacingAndGlyphs">37.00</text>
<text x="48" y="322" textLength="27" lengthAdjust="spacingAndGlyphs">36.00</text>
<text x="48" y="374" textLength="27" lengthAdjust="spacingAndGlyphs">35.00</text>
<text x="48" y="426" textLength="27" lengthAdjust="spacingAndGlyphs">34.00</text>
<text x="43" y="482" textLength="32" lengthAdjust="spacingAndGlyphs">0.0500</text>
<text x="39" y="516" textLength="36" lengthAdjust="spacingAndGlyphs">-0.0500</text>
<text x="39" y="550" textLength="36" lengthAdjust="spacingAndGlyphs">-0.1500</text>
<text x="39" y="585" textLength="36" lengthAdjust="spacingAndGlyphs">-0.2500</text>
<text x="54" y="618" textLength="21" lengthAdjust="spacingAndGlyphs">1.00</text>
<text x="51" y="644" textLength="24" lengthAdjust="spacingAndGlyphs">-0.20</text>
<text x="1204" y="115" textLength="27" lengthAdjust="spacingAndGlyphs">40.00</text>
<text x="1204" y="218" textLength="27" lengthAdjust="spacingAndGlyphs">38.00</text>
<text x="1204" y="270" textLength="27" lengthAdjust="spacingAndGlyphs">37.00</text>
<text x="1204" y="482" textLength="32" lengthAdjust="spacingAndGlyphs">0.0500</text>
<text x="1204" y="516" textLength="36" lengthAdjust="spacingAndGlyphs">-0.0500</text>
<text x="1204" y="550" textLength="36" lengthAdjust="spacingAndGlyphs">-0.1500</text>
<text x="1204" y="585" textLength="36" lengthAdjust="spacingAndGlyphs">-0.2500</text>
<text x="1204" y="618" textLength="21" lengthAdjust="spacingAndGlyphs">1.00</text>
<text x="1204" y="644" textLength="24" lengthAdjust="spacingAndGlyphs">-0.20</text>
</g>
<!-- tags -->
<path fill="#3f4d57" d="M32 155H75L79 162.500L75 170H32ZM1205 155H1246V170H1205L1201 162.500Z"/>
<text class="tg" x="48" y="166.500" textLength="27" lengthAdjust="spacingAndGlyphs">39.01</text>
<text class="tg" x="1204" y="166.500" textLength="27" lengthAdjust="spacingAndGlyphs">39.01</text>
<path fill="#8b1414" d="M1204 273H1247V288H1204L1200 280.500Z"/>
<path fill="#128012" d="M1204 311.500H1248V326.500H1204L1200 319Z"/>
<path fill="#1e8f8f" d="M1204 331H1248V346H1204L1200 338.500Z"/>
<path fill="#ff1a1a" d="M1204 348H1249V363H1204L1200 355.500Z"/>
<path fill="#cc8a00" d="M1204 360H1249V375H1204L1200 367.500Z"/>
<path fill="#0000ff" d="M1204 371H1249V386H1204L1200 378.500Z"/>
<path fill="#1e8f8f" d="M1204 393H1248V408H1204L1200 400.500Z"/>
<path fill="#128012" d="M1204 411.500H1248V426.500H1204L1200 419Z"/>
<path fill="#0a7a0a" d="M1204 518H1248V532H1204L1200 525Z"/>
<path fill="#da70d6" fill-opacity=".9" d="M1204 627H1249V642H1204L1200 634.500Z"/>
<text class="tg" x="1204" y="285" textLength="26" lengthAdjust="spacingAndGlyphs">36.73</text>
<text class="tg" x="1204" y="323.500" textLength="26" lengthAdjust="spacingAndGlyphs">35.97</text>
<text class="tg" x="1204" y="343" textLength="26" lengthAdjust="spacingAndGlyphs">35.61</text>
<text class="tg" x="1204" y="360" textLength="26" lengthAdjust="spacingAndGlyphs">35.28</text>
<text class="tg" x="1204" y="372" textLength="26" lengthAdjust="spacingAndGlyphs">35.04</text>
<text class="tg" x="1204" y="383" textLength="26" lengthAdjust="spacingAndGlyphs">34.84</text>
<text class="tg" x="1204" y="405" textLength="26" lengthAdjust="spacingAndGlyphs">34.42</text>
<text class="tg" x="1204" y="423.500" textLength="26" lengthAdjust="spacingAndGlyphs">34.06</text>
<text class="tg" x="1203" y="529.500" textLength="35" lengthAdjust="spacingAndGlyphs">-0.0867</text>
<text class="tg" x="1203" y="639" textLength="21" lengthAdjust="spacingAndGlyphs">0.10</text>
<!-- time axis -->
<g class="tm" text-anchor="middle">
<text x="155" y="702">10'22</text><text x="323" y="702">11'22</text><text x="491" y="702">12'22</text><text x="659" y="702">'23</text><text x="819" y="702">2'23</text><text x="1155" y="702">4'23</text>
</g>
<rect x="928" y="686" width="77" height="21" fill="#34454f"/>
<text x="966.500" y="701" text-anchor="middle" font-size="12" font-weight="bold" fill="#fff" textLength="71" lengthAdjust="spacingAndGlyphs">02/28/23 13:00</text>
<!-- scrollbar -->
<rect x="31" y="707" width="1218" height="8" fill="#e1e8f0"/>
<rect x="31" y="707" width="8" height="8" fill="#c3ccd6"/>
<rect x="1208" y="707" width="32" height="8" fill="#a9b4c0"/>
<rect x="1240" y="707" width="9" height="8" fill="#c3ccd6"/>
<!-- left toolbar -->
<rect x="2" y="60" width="27" height="655" fill="#eef2f7"/>
<rect x="29" y="60" width="2" height="655" fill="#dfe6ee"/>
<rect x="4.500" y="63.500" width="24" height="23" fill="#f3f6fa" stroke="#b4bfcb"/>
<path fill="#aeb7c2" d="M10 68L21 74L16 76L21 82L18 84L14 78L11 81Z"/>
<path class="ic" stroke-width="2.500" d="M15.500 89V105M8 97H23"/>
<path d="M4 113H29M4 282H29M4 597H29" stroke="#66707a" fill="none"/>
<path class="ic" stroke-width="2" d="M9 135L16 128L23 123M16 128L14 122M16 128L22 130"/>
<path class="ic" d="M10 155L22 143M14 155L22 147M18 155L22 151"/>
<path class="ic" stroke-width="2" d="M9 175H22M12 171L8 175L12 179M19 171L23 175L19 179"/>
<path class="ic" stroke-width="2" d="M15.500 190V204M11 190H20M11 204H20M8 197Q15 193 23 197"/>
<path class="ic" stroke-width="2" d="M8 227L22 213M10 220L20 210M12 232L24 220"/>
<circle class="ic" cx="15.500" cy="243" r="7"/><path class="ic" d="M15.500 234V243L19 246M12 235H19"/>
<path class="ic" d="M10 256H25V262H10Z"/><path class="ib" d="M22 263L12 273"/><circle class="ib" cx="11" cy="274" r="1.500"/>
<path class="ic" stroke-width="3" d="M9 290V304M15.500 290V304M22 290V304"/>
<path class="ic" d="M9 325L13 321L17 325M17 313H24M17 318H24M17 323H24M17 328H24"/>
<path class="ic" d="M8 336H24V351H8ZM16 336V351M8 343H24M10 340H14M18 340H22M10 347H14M18 347H22"/>
<path class="ic" stroke-width="1.800" d="M8 361H24M8 366H24M8 371H24"/>
<circle class="ic" cx="15.500" cy="389" r="7"/><circle class="ic" cx="15.500" cy="389" r="3.500"/><path class="ic" d="M16 389L23 382"/>
<path class="ic" stroke-width="2" stroke-dasharray="2 3" d="M10 418L20 406M13 421L23 409"/>
<path class="ic" stroke-width="3" d="M18 428V442M23 428V442"/><path class="ic" stroke-width="2" d="M9 431L15 436"/>
<path class="ic" stroke-width="2" d="M21 459A8 8 0 0 1 9 472"/>
<path class="ic" d="M12 483H19V490H23L15.500 497L8 490H12Z"/>
<path class="ic" d="M12 518H19V511H23L15.500 504L8 511H12Z"/>
<circle class="ic" cx="15.500" cy="536" r="7.500" stroke-width="2"/>
<rect class="ic" x="8" y="552" width="15" height="12" stroke-width="2"/>
<path fill="#1a7fc1" d="M8 575H23V579H21V577H17V586H19V588H12V586H14V577H10V579H8Z"/>
<path stroke="#d0d6dd" stroke-width="1.500" fill="none" d="M8 620L20 608M12 622L23 612"/>
<path class="ic" d="M9 641L16 633L20 637L13 644H9ZM8 646H18"/><path d="M18 637L23 642M23 637L18 642" stroke="#e53030" stroke-width="1.500"/>
<path class="ic" stroke-width="1.500" d="M9 652V666M24 659H13M17 655L13 659L17 663"/>
<path class="ic" d="M9 683L16 675L20 679L13 686H9Z"/><path class="ib" d="M8 688H22"/>
<path class="ar" d="M12 703V709L8 706Z"/>
<path stroke="#777" fill="none" d="M21 702L24 705L27 702M21 706L24 709L27 706"/>
</svg>
</body></html>
